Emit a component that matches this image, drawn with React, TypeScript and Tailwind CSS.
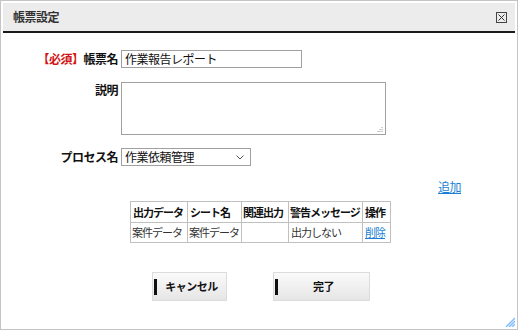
import React from "react";

const font = { fontFamily: '"Noto Sans CJK JP", "Noto Sans", sans-serif' };

export default function App() {
  return (
    <div
      className="w-[518px] h-[330px] bg-white border border-[#c4c4c4] p-[2px] flex flex-col text-[12px] leading-none text-[#111] relative overflow-hidden"
      style={font}
    >
      {/* header */}
      <div className="h-[30px] bg-[#ececec] border-b-2 border-[#1a1a1a] flex items-center justify-between pl-[10px] pr-[8px] shrink-0">
        <span className="font-bold text-[#333] tracking-[-0.5px]">帳票設定</span>
        <span className="w-[11px] h-[11px] border border-[#444] flex items-center justify-center">
          <svg width="7" height="7" viewBox="0 0 7 7">
            <path d="M0.5 0.5 L6.5 6.5 M6.5 0.5 L0.5 6.5" stroke="#333" strokeWidth="1" />
          </svg>
        </span>
      </div>

      {/* body */}
      <div className="flex flex-col pt-[17px] tracking-[-0.5px]">
        <div className="flex items-center">
          <div className="w-[115px] text-right font-bold">
            <span className="text-[#d21414]">【必須】</span>帳票名
          </div>
          <div className="ml-[3px] w-[181px] h-[18px] border border-[#a0a0a0] flex items-center px-[3px]">
            作業報告レポート
          </div>
        </div>

        <div className="flex items-start mt-[14px]">
          <div className="w-[115px] text-right font-bold pt-[2px]">説明</div>
          <div className="ml-[3px] w-[265px] h-[53px] border border-[#a0a0a0] relative">
            <svg className="absolute right-[2px] bottom-[2px]" width="6" height="6" viewBox="0 0 6 6">
              <path d="M5 1 L5 2 M3 3 L3 4 M5 3 L5 4 M1 5 L1 6 M3 5 L3 6 M5 5 L5 6" stroke="#999" strokeWidth="1" />
            </svg>
          </div>
        </div>

        <div className="flex items-center mt-[13px]">
          <div className="w-[115px] text-right font-bold">プロセス名</div>
          <div className="ml-[3px] w-[130px] h-[18px] border border-[#a0a0a0] flex items-center justify-between pl-[3px] pr-[6px]">
            <span>作業依頼管理</span>
            <svg width="8" height="5" viewBox="0 0 8 5">
              <path d="M0.5 0.5 L4 4 L7.5 0.5" stroke="#555" strokeWidth="1" fill="none" />
            </svg>
          </div>
        </div>

        <div className="flex justify-end pr-[54px] mt-[15px]">
          <span className="text-[#1a7fd4] underline">追加</span>
        </div>

        <div className="flex pl-[127px] mt-[8px]">
          <table className="border-collapse table-fixed w-[260px] text-[11px] tracking-[-1px] whitespace-nowrap">
            <colgroup>
              <col className="w-[57px]" />
              <col className="w-[54px]" />
              <col className="w-[47px]" />
              <col className="w-[74px]" />
              <col className="w-[28px]" />
            </colgroup>
            <thead>
              <tr className="h-[21px]">
                <th className="border border-[#c0c0c0] font-bold px-[2px] text-left overflow-hidden">出力データ</th>
                <th className="border border-[#c0c0c0] font-bold px-[2px] text-left overflow-hidden">シート名</th>
                <th className="border border-[#c0c0c0] font-bold px-[1px] text-left overflow-hidden">関連出力</th>
                <th className="border border-[#c0c0c0] font-bold px-[1px] text-left overflow-hidden">警告メッセージ</th>
                <th className="border border-[#c0c0c0] font-bold px-[2px] text-left overflow-hidden">操作</th>
              </tr>
            </thead>
            <tbody>
              <tr className="h-[20px]">
                <td className="border border-[#c0c0c0] px-[1px] text-[#333] overflow-hidden">案件データ</td>
                <td className="border border-[#c0c0c0] px-[1px] text-[#333] overflow-hidden">案件データ</td>
                <td className="border border-[#c0c0c0] px-[1px]"></td>
                <td className="border border-[#c0c0c0] px-[2px] text-[#333] overflow-hidden">出力しない</td>
                <td className="border border-[#c0c0c0] px-[2px] overflow-hidden">
                  <span className="text-[#1a7fd4] underline">削除</span>
                </td>
              </tr>
            </tbody>
          </table>
        </div>

        <div className="flex pl-[149px] mt-[29px] gap-[46px] text-[11px]">
          <button className="w-[75px] h-[29px] border border-[#dcdcdc] bg-gradient-to-b from-[#fafafa] to-[#e6e6e6] flex items-center justify-center relative font-bold pl-[4px]">
            <span className="absolute left-[1px] top-[6px] w-[3px] h-[16px] bg-[#111]" />
            <span>キャンセル</span>
          </button>
          <button className="w-[97px] h-[29px] border border-[#dcdcdc] bg-gradient-to-b from-[#fafafa] to-[#e6e6e6] flex items-center justify-center relative font-bold pl-[4px]">
            <span className="absolute left-[1px] top-[6px] w-[3px] h-[16px] bg-[#111]" />
            <span>完了</span>
          </button>
        </div>
      </div>

      <svg className="absolute right-[2px] bottom-[2px]" width="10" height="10" viewBox="0 0 10 10">
        <path d="M10 1 L1 10 M10 4 L4 10 M10 7 L7 10" stroke="#7fbfff" strokeWidth="1.5" />
      </svg>
    </div>
  );
}
